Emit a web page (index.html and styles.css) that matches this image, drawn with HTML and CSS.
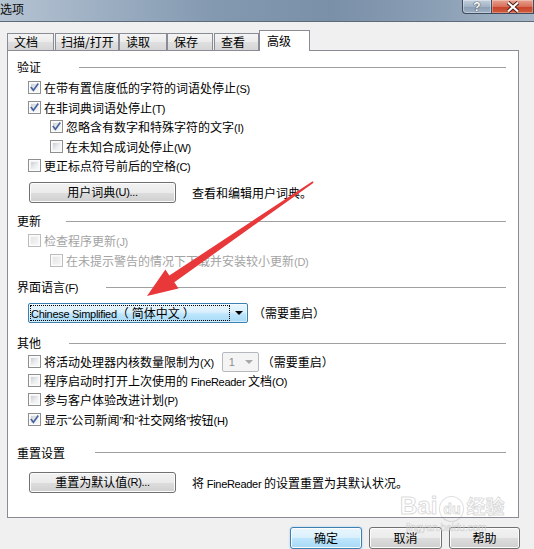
FILE: index.html
```html
<!DOCTYPE html>
<html lang="zh-CN">
<head>
<meta charset="utf-8">
<title>选项</title>
<link rel="stylesheet" href="styles.css">
</head>
<body>
<div class="titlebar">
  <span class="title">选项</span>
  <div class="caps">
    <div class="cap help">?</div>
    <div class="cap close">
      <svg class="xicon" viewBox="0 0 16 12" width="16" height="12">
        <path class="xo" d="M3 1.5 13 10.5 M13 1.5 3 10.5"/>
        <path class="xi" d="M3 1.5 13 10.5 M13 1.5 3 10.5"/>
      </svg>
    </div>
  </div>
</div>

<div class="tabs">
  <div class="tab t1">文档</div>
  <div class="tab t2">扫描/打开</div>
  <div class="tab t3">读取</div>
  <div class="tab t4">保存</div>
  <div class="tab t5">查看</div>
  <div class="tab sel">高级</div>
</div>

<div class="panel">
  <div class="head h1"><span>验证</span><i class="rule r1"></i></div>
  <div class="rows">
    <div class="row"><span class="cbx on"><svg class="tick" viewBox="0 0 11 11"><path d="M2.3 5.6 4.4 8.3 8.8 2.2"/></svg></span><span>在带有置信度低的字符的词语处停止<span class="lat">(S)</span></span></div>
    <div class="row"><span class="cbx on"><svg class="tick" viewBox="0 0 11 11"><path d="M2.3 5.6 4.4 8.3 8.8 2.2"/></svg></span><span>在非词典词语处停止<span class="lat">(T)</span></span></div>
    <div class="row ind"><span class="cbx on"><svg class="tick" viewBox="0 0 11 11"><path d="M2.3 5.6 4.4 8.3 8.8 2.2"/></svg></span><span>忽略含有数字和特殊字符的文字<span class="lat">(I)</span></span></div>
    <div class="row ind"><span class="cbx"></span><span>在未知合成词处停止<span class="lat">(W)</span></span></div>
    <div class="row"><span class="cbx"></span><span>更正标点符号前后的空格<span class="lat">(C)</span></span></div>
  </div>
  <div class="btnrow b1">
    <div class="btn wide">用户词典<span class="lat">(U)...</span></div>
    <span class="desc">查看和编辑用户词典。</span>
  </div>

  <div class="head h2"><span>更新</span><i class="rule r2"></i></div>
  <div class="rows">
    <div class="row dis"><span class="cbx"></span><span>检查程序更新<span class="lat">(J)</span></span></div>
    <div class="row ind dis"><span class="cbx"></span><span>在未提示警告的情况下下载并安装较小更新<span class="lat">(D)</span></span></div>
  </div>

  <div class="head h3"><span>界面语言<span class="lat">(F)</span></span><i class="rule r3"></i></div>
  <div class="comborow">
    <div class="combo">
      <div class="val"><span class="lat">Chinese Simplified</span>（<span class="cn">简体中文</span>）</div>
      <div class="drop"><i class="tri"></i></div>
    </div>
    <span class="note">（需要重启）</span>
  </div>

  <div class="head h4"><span>其他</span><i class="rule r4"></i></div>
  <div class="rows">
    <div class="row first"><span class="cbx"></span><span>将活动处理器内核数量限制为<span class="lat">(X)</span></span>
      <div class="mini"><span class="lat">1</span><i class="tri gray"></i></div>
      <span class="note2">（需要重启）</span>
    </div>
    <div class="row"><span class="cbx"></span><span>程序启动时打开上次使用的<span class="lat"> FineReader </span>文档<span class="lat">(O)</span></span></div>
    <div class="row"><span class="cbx"></span><span>参与客户体验改进计划<span class="lat">(P)</span></span></div>
    <div class="row"><span class="cbx on"><svg class="tick" viewBox="0 0 11 11"><path d="M2.3 5.6 4.4 8.3 8.8 2.2"/></svg></span><span>显示<span class="lat">“</span>公司新闻<span class="lat">”</span>和<span class="lat">“</span>社交网络<span class="lat">”</span>按钮<span class="lat">(H)</span></span></div>
  </div>

  <div class="head h5"><span>重置设置</span><i class="rule r5"></i></div>
  <div class="btnrow b2">
    <div class="btn wide">重置为默认值<span class="lat">(R)...</span></div>
    <span class="desc">将<span class="lat"> FineReader </span>的设置重置为其默认状况。</span>
  </div>
</div>

<div class="footer">
  <div class="btn ok">确定</div>
  <div class="btn cancel">取消</div>
  <div class="btn helpb">帮助</div>
</div>

<svg class="arrow" viewBox="0 0 534 549" width="534" height="549">
  <polygon points="147,296 178.5,288.5 174.3,282.2 313.6,182.7 312.6,181.3 169.3,275.6 165.4,269.6"/>
</svg>

<div class="wm">
  <div class="wm-top"><span class="wm-bai">Bai</span><span class="wm-du">du</span><span class="wm-jy">经验</span></div>
  <div class="wm-url">jingyan.baidu.com</div>
</div>
</body>
</html>
```

FILE: styles.css
```css
html, body {
  margin: 0;
  padding: 0;
}
body {
  width: 534px;
  height: 549px;
  overflow: hidden;
  position: relative;
  background: #f0f0f0;
  font-family: "Noto Sans CJK SC", sans-serif;
  font-size: 12px;
  color: #000;
  text-spacing-trim: space-all;
}

.lat {
  font-family: "Liberation Sans", "Noto Sans CJK SC", sans-serif;
  font-size: 11px;
  letter-spacing: -0.3px;
}

/* ---------- title bar ---------- */
.titlebar {
  height: 22px;
  box-sizing: border-box;
  display: flex;
  align-items: flex-start;
  background: linear-gradient(90deg, #b6c4d3 0%, #9eb0c3 18%, #8399b0 40%, #7a90a8 62%, #8b9fb5 82%, #a6b6c7 100%);
  border-bottom: 1px solid #5d6a78;
}
.title {
  line-height: 17px;
  color: #0b0b0b;
}
.caps {
  margin-left: auto;
  display: flex;
  flex-shrink: 0;
}
.cap {
  height: 14px;
  box-sizing: border-box;
  border: 1px solid #3d4b5c;
  border-top: none;
  display: flex;
  align-items: center;
  justify-content: center;
}
.help {
  width: 29px;
  border-bottom-left-radius: 4px;
  border-right: none;
  background: linear-gradient(#c3cfdb, #a3b3c5 50%, #8a9db2 51%, #9fb1c4);
  color: #fff;
  font-family: "Liberation Sans", sans-serif;
  font-weight: bold;
  font-size: 12px;
  line-height: 12px;
  text-shadow: 0 0 1px #27323f, 0 0 1px #27323f;
  box-shadow: inset 0 0 0 1px rgba(255,255,255,0.35);
}
.close {
  width: 43px;
  background: linear-gradient(#e8a291, #d8705a 50%, #c7432b 51%, #d05a3c);
  box-shadow: inset 0 0 0 1px rgba(255,255,255,0.3);
  justify-content: flex-start;
  padding-left: 13px;
}
.xicon { display: block; }
.xo { stroke: #4a1d12; stroke-width: 4; fill: none; }
.xi { stroke: #fff; stroke-width: 2.2; fill: none; }

/* ---------- tabs ---------- */
.tabs {
  display: flex;
  align-items: flex-end;
  height: 21px;
  margin-top: 8px;
  padding-left: 7px;
  position: relative;
  z-index: 2;
}
.tab {
  box-sizing: border-box;
  height: 17px;
  margin-bottom: 1px;
  border: 1px solid #898c95;
  border-bottom: none;
  background: linear-gradient(#f4f4f4, #ebebeb 50%, #dfdfdf 51%, #d6d6d6);
  padding-left: 6px;
  line-height: 16px;
  white-space: nowrap;
}
.t1 { width: 47px; }
.t2 { width: 64px; margin-left: 1px; padding-left: 5px; }
.t3 { width: 48px; }
.t4 { width: 46px; }
.t5 { width: 45px; margin-left: 1px; }
.sel {
  width: 51px;
  height: 21px;
  margin-bottom: 0;
  background: #fff;
  padding-left: 7px;
  line-height: 20px;
}

/* ---------- panel ---------- */
.panel {
  margin-left: 7px;
  margin-top: -1px;
  width: 512px;
  height: 468px;
  box-sizing: border-box;
  border: 1px solid #898c95;
  background: #fff;
  padding: 0 12px 0 9px;
  position: relative;
  z-index: 1;
}
.head {
  display: flex;
  align-items: center;
  height: 20px;
  line-height: 20px;
  white-space: nowrap;
}
.rule {
  margin-left: auto;
  height: 0;
  border-top: 1px solid #a0a0a0;
}
.r1 { width: 427px; }
.r2 { width: 440px; }
.r3 { width: 400px; }
.r4 { width: 437px; }
.r5 { width: 411px; }

.h1 { margin-top: 6px; }
.h2 { margin-top: 8.5px; }
.h3 { margin-top: 7.5px; }
.h4 { margin-top: 10.5px; }
.h5 { margin-top: 13.7px; }
.h1 + .rows { margin-top: 1px; }

.row {
  display: flex;
  align-items: center;
  height: 19.5px;
  padding-left: 11px;
  white-space: nowrap;
}
.row.ind { padding-left: 33px; }
.row.first { height: 17.5px; }
.row.dis { color: #a3a3a3; }

.cbx {
  width: 13px;
  height: 13px;
  box-sizing: border-box;
  border: 1px solid #8e8f8f;
  background: #f6f6f6;
  margin-right: 3px;
  flex-shrink: 0;
  position: relative;
  box-shadow: inset 0 0 0 1px #fbfbfb;
}
.cbx::before {
  content: "";
  position: absolute;
  left: 2px; top: 2px; right: 2px; bottom: 2px;
  background: linear-gradient(135deg, #cbcfd5, #eceef0 60%, #f7f7f7);
}
.dis .cbx { border-color: #bcbcbc; }
.dis .cbx::before { background: linear-gradient(135deg, #e6e6e6, #f4f4f4); }
.tick {
  position: absolute;
  left: 0; top: 0;
  width: 11px;
  height: 11px;
  z-index: 1;
}
.tick path {
  fill: none;
  stroke: #4862a0;
  stroke-width: 1.6;
  stroke-linecap: square;
}

/* ---------- buttons ---------- */
.btn {
  box-sizing: border-box;
  height: 21px;
  border: 1px solid #707070;
  border-radius: 3px;
  background: linear-gradient(#f2f2f2, #ebebeb 50%, #dddddd 51%, #cfcfcf);
  box-shadow: inset 0 0 0 1px #fcfcfc;
  display: flex;
  align-items: center;
  justify-content: center;
  white-space: nowrap;
  line-height: 18px;
}
.btnrow {
  display: flex;
  align-items: center;
  height: 21px;
  padding-left: 12px;
}
.b1 { margin-top: 6px; }
.b2 { margin-top: 9px; }
.btn.wide { width: 147px; }
.desc { margin-left: 16px; white-space: nowrap; }

/* ---------- combo ---------- */
.comborow {
  display: flex;
  align-items: center;
  height: 20px;
  margin-top: 5px;
  padding-left: 11px;
}
.combo {
  width: 220px;
  height: 20px;
  box-sizing: border-box;
  border: 1px solid #3c7fb1;
  border-radius: 2px;
  background: linear-gradient(#eaf6fd, #d9f0fc 45%, #bee6fd 55%, #a7d9f5);
  display: flex;
  box-shadow: inset 0 0 0 1px rgba(255,255,255,0.5);
}
.val {
  flex: 1;
  margin: 1px 0 1px 1px;
  border: 1px dotted #000;
  line-height: 14px;
  white-space: nowrap;
  overflow: hidden;
}
.cn { margin: 0 3px; }
.drop {
  width: 17px;
  display: flex;
  align-items: center;
  justify-content: center;
}
.tri {
  width: 0;
  height: 0;
  border-left: 4px solid transparent;
  border-right: 4px solid transparent;
  border-top: 4px solid #000;
  margin-top: 1px;
}
.tri.gray { border-top-color: #a8a8a8; }
.note { margin-left: 5px; white-space: nowrap; }
.mini {
  width: 37px;
  height: 20px;
  box-sizing: border-box;
  margin-left: 8px;
  border: 1px solid #b5b9bd;
  border-radius: 2px;
  background: #f4f4f4;
  color: #8d8d8d;
  display: flex;
  align-items: center;
  justify-content: space-between;
  padding: 0 5px 0 6px;
  flex-shrink: 0;
}
.note2 { margin-left: 3px; }

/* ---------- footer ---------- */
.footer {
  display: flex;
  justify-content: flex-end;
  gap: 7px;
  margin-top: 9px;
  padding-right: 14px;
}
.footer .btn { height: 22px; }
.ok {
  width: 72px;
  border-color: #3c7fb1;
  background: linear-gradient(#eaf6fd, #d9f0fc 50%, #bee6fd 51%, #a7d9f5);
  box-shadow: inset 0 0 0 1px #fcfcfc, 0 0 2px #8cc7ec;
}
.cancel { width: 73px; }
.helpb { width: 71px; }

/* ---------- red arrow overlay ---------- */
.arrow {
  position: absolute;
  left: 0;
  top: 0;
  pointer-events: none;
  z-index: 5;
}
.arrow polygon { fill: #e8383a; }

/* ---------- watermark ---------- */
.wm {
  position: absolute;
  left: 400px;
  top: 494px;
  z-index: 6;
  pointer-events: none;
  color: rgba(255,255,255,0.5);
  -webkit-text-stroke: 1px rgba(150,150,150,0.35);
  font-family: "Liberation Sans", sans-serif;
}
.wm-top {
  display: flex;
  align-items: baseline;
  line-height: 24px;
  font-weight: bold;
}
.wm-bai { font-size: 24px; }
.wm-du {
  font-size: 14px;
  margin-left: 2px;
  border: 1px solid rgba(150,150,150,0.3);
  border-radius: 50%;
  padding: 0 3px;
}
.wm-jy {
  font-family: "Noto Sans CJK SC", sans-serif;
  font-size: 19px;
  margin-left: 2px;
}
.wm-url {
  font-size: 10px;
  line-height: 12px;
  margin-left: 6px;
  -webkit-text-stroke: 0.6px rgba(150,150,150,0.35);
}
```
